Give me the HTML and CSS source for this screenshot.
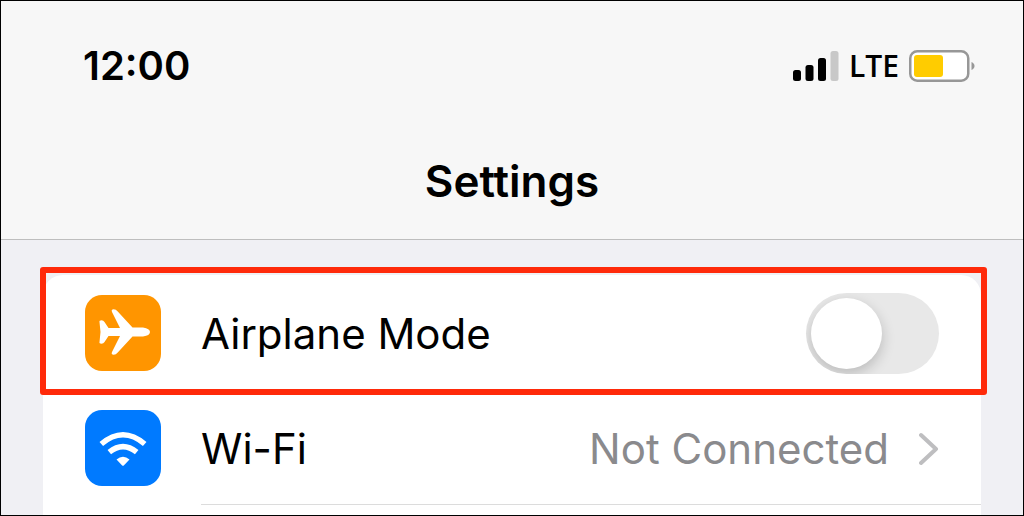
FILE: index.html
```html
<!DOCTYPE html>
<html lang="en">
<head>
    <meta charset="UTF-8">
    <meta name="viewport" content="width=device-width, initial-scale=1.0">
    <title>Settings</title>
    <link rel="stylesheet" href="styles.css">
</head>
<body>
    <header class="header">
        <div class="status-bar">
            <span class="time">12:00</span>
            <div class="status-icons">
                <svg class="signal" viewBox="0 0 46 30" aria-hidden="true">
                    <rect x="0" y="19" width="8" height="11" rx="2.5"/>
                    <rect x="12.5" y="14" width="8" height="16" rx="2.5"/>
                    <rect x="25" y="7" width="8" height="23" rx="2.5"/>
                    <rect class="signal-off" x="37.5" y="0" width="8" height="30" rx="2.5"/>
                </svg>
                <span class="network">LTE</span>
                <svg class="battery" viewBox="0 0 66 32" aria-hidden="true">
                    <rect class="battery-case" x="1.25" y="1.25" width="58" height="29.5" rx="7"/>
                    <rect class="battery-level" x="5" y="5" width="29" height="22" rx="3"/>
                    <path class="battery-tip" d="M62.5 12c4 1.5 4 6.500 0 8z"/>
                </svg>
            </div>
        </div>
        <h1 class="title">Settings</h1>
    </header>

    <main class="content">
        <div class="group">
            <div class="row highlighted">
                <svg class="icon airplane" viewBox="0 0 76 76" aria-hidden="true">
                    <path d="M14.500 27Q14 25.300 16.500 25.300Q18.500 25.300 19.500 27L23.500 33H35L27 17Q25.900 14.300 28.700 14.300Q31 14.300 32.500 16.200L47.500 32.500H58Q65 33.500 65 37Q65 40.500 58 41.500H47.500L32.500 57.800Q31 59.700 28.700 59.700Q25.900 59.700 27 57L35 41H23.500L19.500 47Q18.500 48.700 16.500 48.700Q14 48.700 14.500 47L15.500 37Z"/>
                </svg>
                <div class="row-body">
                    <label class="label" for="airplane">Airplane Mode</label>
                    <input class="switch" type="checkbox" role="switch" id="airplane">
                </div>
            </div>
            <a class="row" href="#wifi">
                <svg class="icon wifi" viewBox="0 0 76 76" aria-hidden="true">
                    <path class="wave" d="M16.300 34Q38 15.500 59.700 34"/>
                    <path class="wave" d="M24.300 42.200Q38 31 51.700 42.200"/>
                    <path d="M31.500 49.500Q38 44 44.500 49.500L38.800 55.400Q38 56 37.200 55.400Z"/>
                </svg>
                <div class="row-body">
                    <span class="label">Wi-Fi</span>
                    <span class="value">Not Connected</span>
                    <svg class="chevron" viewBox="0 0 20 34" aria-hidden="true">
                        <path d="M2 3L17 17L2 31"/>
                    </svg>
                </div>
            </a>
        </div>
    </main>
</body>
</html>
```
FILE: styles.css
```css
:root {
    --bar: #f7f7f7;
    --page: #f0f0f4;
    --line: #dcdcdc;
    --gray: #8a8a8d;
    --orange: #ff9500;
    --blue: #007aff;
    --red: #ff2a0a;
}

* {
    box-sizing: border-box;
}

body {
    margin: 0;
    min-height: 100vh;
    display: flex;
    flex-direction: column;
    border: 1px solid #000;
    background-color: var(--page);
    color: #000;
    font-family: Inter, "Liberation Sans", sans-serif;
    font-size: 42px;
    line-height: 48px;
}

.header {
    padding: 41px 48px 34px 82px;
    background-color: var(--bar);
    border-bottom: 1px solid #bebebe;
}

.status-bar {
    display: flex;
    justify-content: space-between;
    align-items: center;
}

.time {
    font-size: 40px;
    font-weight: 600;
}

.status-icons {
    display: flex;
    align-items: center;
    gap: 10px;
}

.signal {
    width: 46px;
    height: 30px;
}

.signal-off {
    fill: #c8c8c8;
}

.network {
    font-family: "Open Sans", "Noto Sans", sans-serif;
    font-size: 30px;
    font-weight: 600;
}

.battery {
    width: 66px;
    height: 32px;
}

.battery-case {
    fill: #fff;
    stroke: #979797;
    stroke-width: 2.5;
}

.battery-level {
    fill: #ffcc00;
}

.battery-tip {
    fill: #979797;
}

.title {
    margin: 67px 34px 0 0;
    font-size: 44px;
    font-weight: 600;
    text-align: center;
}

.content {
    flex: 1;
    display: flex;
    padding: 35px 42px 0;
}

.group {
    flex: 1;
    background-color: #fff;
    border-radius: 20px 20px 0 0;
}

.row {
    position: relative;
    display: flex;
    align-items: center;
    gap: 40px;
    padding-left: 42px;
    color: inherit;
    text-decoration: none;
}

/* red frame laid over the row */
.highlighted::after {
    content: "";
    position: absolute;
    inset: -8px -6px -5px -3px;
    border: 6px solid var(--red);
    border-radius: 3px;
    pointer-events: none;
    z-index: 1;
}

.icon {
    flex: none;
    width: 76px;
    height: 76px;
    border-radius: 17px;
    fill: #fff;
}

.airplane {
    background-color: var(--orange);
}

.wifi {
    background-color: var(--blue);
}

.wave {
    fill: none;
    stroke: #fff;
    stroke-width: 5.5;
}

.row-body {
    flex: 1;
    display: flex;
    align-items: center;
    min-height: 115px;
    padding: 3px 42px 0 0;
    border-bottom: 1px solid var(--line);
}

.label {
    flex: 1;
}

.value {
    color: var(--gray);
}

.switch {
    appearance: none;
    display: flex;
    align-items: center;
    width: 133px;
    height: 81px;
    margin: 0;
    padding: 5px;
    border-radius: 41px;
    background-color: #e8e8e8;
    overflow: hidden;
    cursor: pointer;
}

.switch::before {
    content: "";
    width: 71px;
    height: 71px;
    border-radius: 50%;
    background-color: #fff;
    box-shadow: 0 5px 14px rgba(0, 0, 0, 0.2);
}

.switch:checked {
    justify-content: flex-end;
    background-color: #34c759;
}

.chevron {
    width: 20px;
    height: 34px;
    margin-left: 30px;
    fill: none;
    stroke: #bebec0;
    stroke-width: 4;
    stroke-linecap: round;
    stroke-linejoin: round;
}
```
